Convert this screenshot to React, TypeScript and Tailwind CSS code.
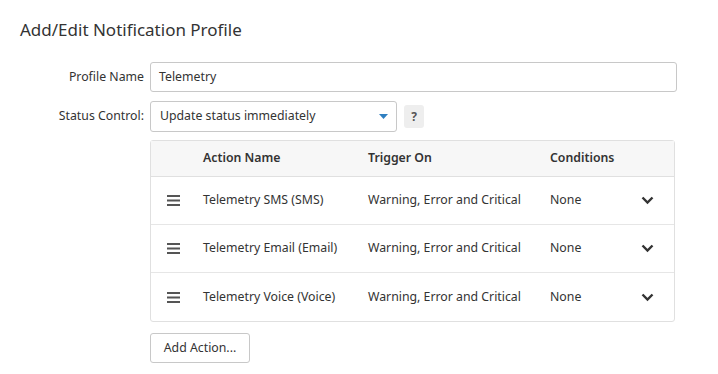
const actions = [
  { name: "Telemetry SMS (SMS)", trigger: "Warning, Error and Critical", conditions: "None" },
  { name: "Telemetry Email (Email)", trigger: "Warning, Error and Critical", conditions: "None" },
  { name: "Telemetry Voice (Voice)", trigger: "Warning, Error and Critical", conditions: "None" },
];

function Grip() {
  return (
    <svg width="13" height="11" viewBox="0 0 13 11" className="text-[#555]">
      <rect x="0" y="0" width="13" height="2" fill="currentColor" />
      <rect x="0" y="4.5" width="13" height="2" fill="currentColor" />
      <rect x="0" y="9" width="13" height="2" fill="currentColor" />
    </svg>
  );
}

function Chevron() {
  return (
    <svg width="13" height="9" viewBox="0 0 13 9">
      <path d="M1.5 1.5l5 5 5-5" fill="none" stroke="#333" strokeWidth="2.4" />
    </svg>
  );
}

export default function App() {
  return (
    <div className="w-[718px] h-[374px] bg-white text-[#333] font-['Noto_Sans',sans-serif] text-[12.3px] overflow-hidden">
      <h1 className="pl-5 pt-[17px] text-[17px] leading-[26px] text-[#333]">Add/Edit Notification Profile</h1>

      <div className="mt-[19px] flex flex-col gap-[9px]">
        <div className="flex items-center">
          <label className="w-[144px] text-right text-[#333]">Profile Name</label>
          <div className="ml-[6px] w-[527px] h-[30px] border border-[#c8c8c8] rounded-[3px] flex items-center px-2">
            Telemetry
          </div>
        </div>
        <div className="flex items-center">
          <label className="w-[144px] text-right text-[#333]">Status Control:</label>
          <div className="ml-[6px] w-[247px] h-[31px] border border-[#c8c8c8] rounded-[3px] flex items-center justify-between pl-[9px] pr-[8px]">
            <span>Update status immediately</span>
            <svg width="9" height="5" viewBox="0 0 9 5">
              <path d="M0 0h9L4.5 5z" fill="#2f7fc1" />
            </svg>
          </div>
          <div className="ml-[7px] w-[20px] h-[23px] bg-[#eeeeee] rounded-[3px] flex items-center justify-center text-[12px] font-bold text-[#555]">
            ?
          </div>
        </div>
      </div>

      <div className="ml-[150px] mt-[8px] w-[525px] border border-[#e0e0e0] rounded-[3px]">
        <div className="h-[36px] bg-[#f7f7f7] border-b border-[#e0e0e0] flex items-center font-semibold text-[#333]">
          <div className="w-[52px]" />
          <div className="w-[165px]">Action Name</div>
          <div className="w-[182px]">Trigger On</div>
          <div className="flex-1">Conditions</div>
        </div>
        {actions.map((a, i) => (
          <div
            key={i}
            className={`h-[48px] flex items-center ${i < actions.length - 1 ? "border-b border-[#e6e6e6]" : ""}`}
          >
            <div className="w-[52px] pl-[16px] flex items-center">
              <Grip />
            </div>
            <div className="w-[165px]">{a.name}</div>
            <div className="w-[182px]">{a.trigger}</div>
            <div className="flex-1">{a.conditions}</div>
            <div className="pr-[20px] flex items-center">
              <Chevron />
            </div>
          </div>
        ))}
      </div>

      <button className="ml-[150px] mt-[11px] h-[30px] w-[100px] border border-[#c8c8c8] rounded-[3px] bg-white text-[#333] text-[12.3px]">
        Add Action...
      </button>
    </div>
  );
}
